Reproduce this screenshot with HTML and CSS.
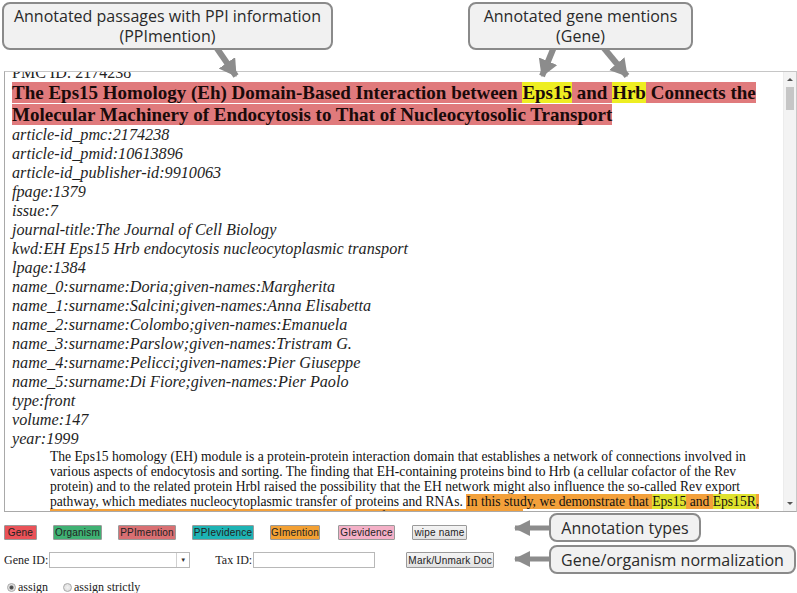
FILE: index.html
```html
<!DOCTYPE html>
<html>
<head>
<meta charset="utf-8">
<link rel="stylesheet" href="styles.css">
</head>
<body>
<div class="page">
  <div class="doc">
    <div class="doc-view">
      <div class="doc-inner">
        <div class="pmc">PMC ID: 2174238</div>
        <h1 class="title"><span class="hl-ppi">The Eps15 Homology (Eh) Domain-Based Interaction between <span class="hl-gene">Eps15</span> and <span class="hl-gene">Hrb</span> Connects the Molecular Machinery of Endocytosis to That of Nucleocytosolic Transport</span></h1>
        <ul class="meta">
          <li>article-id_pmc:2174238</li>
          <li>article-id_pmid:10613896</li>
          <li>article-id_publisher-id:9910063</li>
          <li>fpage:1379</li>
          <li>issue:7</li>
          <li>journal-title:The Journal of Cell Biology</li>
          <li>kwd:EH Eps15 Hrb endocytosis nucleocytoplasmic transport</li>
          <li>lpage:1384</li>
          <li>name_0:surname:Doria;given-names:Margherita</li>
          <li>name_1:surname:Salcini;given-names:Anna Elisabetta</li>
          <li>name_2:surname:Colombo;given-names:Emanuela</li>
          <li>name_3:surname:Parslow;given-names:Tristram G.</li>
          <li>name_4:surname:Pelicci;given-names:Pier Giuseppe</li>
          <li>name_5:surname:Di Fiore;given-names:Pier Paolo</li>
          <li>type:front</li>
          <li>volume:147</li>
          <li>year:1999</li>
        </ul>
        <p class="abstract">The Eps15 homology (EH) module is a protein-protein interaction domain that establishes a network of connections involved in various aspects of endocytosis and sorting. The finding that EH-containing proteins bind to Hrb (a cellular cofactor of the Rev protein) and to the related protein Hrbl raised the possibility that the EH network might also influence the so-called Rev export pathway, which mediates nucleocytoplasmic transfer of proteins and RNAs. <span class="hl-gi">In this study, we demonstrate that <span class="hl-gene2">Eps15</span> and <span class="hl-gene2">Eps15R</span>, interact with Hrb in vivo and that this interaction is required for Rev-dependent export.</span></p>
      </div>
    </div>
    <div class="scrollbar">
      <span class="sb-up"></span>
      <span class="sb-thumb"></span>
      <span class="sb-fill"></span>
      <span class="sb-down"></span>
    </div>
  </div>

  <div class="btn-row">
    <button class="tag t-gene">Gene</button>
    <button class="tag t-org">Organism</button>
    <button class="tag t-ppim">PPImention</button>
    <button class="tag t-ppie">PPIevidence</button>
    <button class="tag t-gim">GImention</button>
    <button class="tag t-gie">GIevidence</button>
    <button class="tag t-wipe">wipe name</button>
  </div>

  <div class="id-row">
    <label class="lbl">Gene ID:</label>
    <span class="select"><span class="select-val"></span><span class="select-arrow">&#9660;</span></span>
    <label class="lbl tax">Tax ID:</label>
    <span class="text-input"></span>
    <button class="tag t-mark">Mark/Unmark Doc</button>
  </div>

  <div class="radio-row">
    <label class="radio"><span class="dot checked"></span>assign</label>
    <label class="radio"><span class="dot"></span>assign strictly</label>
  </div>

  <svg class="arrows" width="797" height="593" viewBox="0 0 797 593">
    <defs>
      <marker id="head" markerUnits="userSpaceOnUse" markerWidth="22" markerHeight="22" refX="16" refY="10" orient="auto">
        <path d="M0,0 L17,10 L0,20 Z" fill="#8c8c8c"/>
      </marker>
      <marker id="headL" markerUnits="userSpaceOnUse" markerWidth="22" markerHeight="22" refX="15" refY="8" orient="auto">
        <path d="M0,0 L16,8 L0,16 Z" fill="#8c8c8c"/>
      </marker>
    </defs>
    <line x1="216" y1="47" x2="236" y2="76" stroke="#8c8c8c" stroke-width="6" marker-end="url(#head)"/>
    <line x1="554" y1="47" x2="542" y2="76" stroke="#8c8c8c" stroke-width="6" marker-end="url(#head)"/>
    <line x1="603" y1="47" x2="627" y2="76" stroke="#8c8c8c" stroke-width="6" marker-end="url(#head)"/>
    <line x1="551" y1="528" x2="515" y2="528" stroke="#8c8c8c" stroke-width="5" marker-end="url(#headL)"/>
    <line x1="551" y1="559" x2="515" y2="559" stroke="#8c8c8c" stroke-width="5" marker-end="url(#headL)"/>
  </svg>

  <div class="callout c-ppi">Annotated passages with PPI information<br>(PPImention)</div>
  <div class="callout c-gene">Annotated gene mentions<br>(Gene)</div>
  <div class="callout c-types">Annotation types</div>
  <div class="callout c-norm">Gene/organism normalization</div>
</div>
</body>
</html>
```

FILE: styles.css
```css
* { box-sizing: border-box; }
html, body { margin: 0; padding: 0; background: #fff; }
body { width: 797px; height: 593px; overflow: hidden; font-family: "Liberation Serif", "Times New Roman", serif; color: #111; }

.page { position: relative; width: 797px; height: 593px; padding: 71px 0 0 4px; }

/* document viewer */
.doc { display: flex; height: 441px; border: 1px solid #a9a9a9; border-right-color: #c8c8c8; border-top-color: #c6c6c6; background: #fff; }
.doc-view { flex: 1; min-width: 0; overflow: hidden; }
.doc-inner { margin-top: -9.5px; padding: 0 13px 0 7px; }
.pmc { font-size: 16px; line-height: 19px; color: #222; }
.title { margin: 0; font-size: 19px; line-height: 22px; font-weight: bold; color: #1a0a0a; }
.hl-ppi { background: #e07a7c; }
.hl-gene { background: #eeee22; }
.meta { list-style: none; margin: 0; padding: 0; font-style: italic; font-size: 16.2px; line-height: 19.05px; color: #1e1e1e; }
.abstract { margin: 0; padding-left: 38px; font-size: 13.6px; line-height: 15px; color: #111; }
.hl-gi { background: #f3a03a; }
.hl-gene2 { background: #dfe22e; }

.scrollbar { width: 13px; flex-shrink: 0; display: flex; flex-direction: column; align-items: center; background: #f3f3f3; border-left: 1px solid #ececec; padding: 4px 0 4px; }
.sb-up, .sb-down { width: 0; height: 0; border-left: 3px solid transparent; border-right: 3px solid transparent; }
.sb-up { border-bottom: 3px solid #555; margin-top: 2px; }
.sb-down { border-top: 3px solid #555; margin-bottom: 2px; }
.sb-thumb { width: 8px; height: 23px; background: #c6c6c6; margin-top: 6px; }
.sb-fill { flex: 1; }

/* buttons */
.btn-row { display: flex; gap: 16px; margin-top: 13px; height: 15px; }
.tag { font-family: "Liberation Sans", Arial, sans-serif; font-size: 10px; letter-spacing: 0.2px; height: 15px; padding: 0; border: 1px solid #9a9a9a; border-radius: 1px; color: #222; line-height: 13px; text-align: center; }
.t-gene { width: 33px; background: #ea5258; }
.t-org { width: 49px; background: #3fb173; }
.t-ppim { width: 58px; background: #d96f72; }
.t-ppie { width: 62px; background: #1db3b4; }
.t-gim { width: 50px; background: #f3a033; }
.t-gie { width: 57px; background: #f4b0c7; margin-left: 2px; }
.t-wipe { width: 55px; background: linear-gradient(#f4f4f4, #e1e1e1); margin-left: 1px; }
.t-mark { width: 88px; height: 16px; background: linear-gradient(#f4f4f4, #e1e1e1); margin-left: 31px; }

.id-row { display: flex; align-items: center; margin-top: 12px; height: 16px; font-size: 12px; }
.lbl { color: #222; }
.select { display: flex; margin-left: 1px; width: 141px; height: 16px; border: 1px solid #b8b8b8; background: #fff; }
.select-val { flex: 1; }
.select-arrow { width: 13px; border-left: 1px solid #d0d0d0; font-size: 6px; line-height: 14px; text-align: center; color: #333; }
.tax { margin-left: 25px; }
.text-input { margin-left: 1px; width: 122px; height: 16px; border: 1px solid #b8b8b8; background: #fff; }

.radio-row { display: flex; gap: 15px; margin-top: 12px; padding-left: 3px; font-size: 12px; color: #222; }
.radio { display: flex; align-items: center; gap: 2px; }
.dot { width: 9px; height: 9px; border-radius: 50%; border: 1px solid #a8a8a8; background: radial-gradient(circle, #f2f2f2 0, #d8d8d8 100%); }
.dot.checked { background: radial-gradient(circle, #444 0, #555 1.5px, #ddd 2.5px, #eee 100%); }

/* annotation callouts */
.arrows { position: absolute; left: 0; top: 0; pointer-events: none; }
.callout { position: absolute; border: 2px solid #8a8a8a; border-radius: 8px; background: #f1f1f1; font-family: "Open Sans", "Noto Sans", sans-serif; font-size: 16px; color: #2a2a2a; text-align: center; line-height: 20px; display: flex; align-items: center; justify-content: center; }
.c-ppi { left: 2px; top: 2px; width: 331px; height: 48px; }
.c-gene { left: 468px; top: 2px; width: 225px; height: 48px; }
.c-types { left: 549px; top: 513px; width: 152px; height: 29px; }
.c-norm { left: 549px; top: 545px; width: 247px; height: 29px; }
```
